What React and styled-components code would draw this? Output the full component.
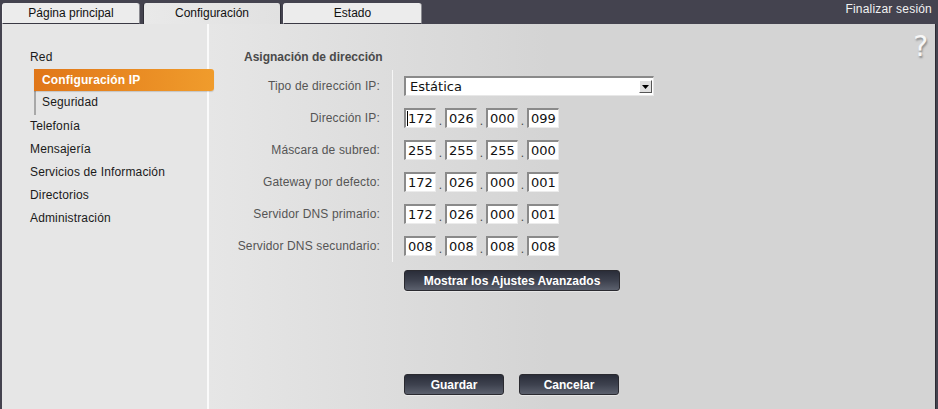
import React from "react";
import styled, { createGlobalStyle } from "styled-components";

const Global = createGlobalStyle`
  html, body { margin: 0; padding: 0; background: #44434f; }
  body { font-family: "Liberation Sans", Arial, sans-serif; font-size: 12px; }
  * { box-sizing: border-box; }
`;

const Page = styled.div`
  width: 938px;
  height: 409px;
  background: #44434f;
  display: flex;
  flex-direction: column;
  overflow: hidden;
`;

const TopBar = styled.div`
  height: 24px;
  display: flex;
  align-items: flex-end;
  padding-left: 2px;
  position: relative;
`;

const Tabs = styled.div`
  display: flex;
  align-items: flex-end;
`;

const Tab = styled.div`
  width: ${(p) => p.$w}px;
  height: 21px;
  margin-left: ${(p) => p.$ml || 0}px;
  border-radius: 3px 3px 0 0;
  background: ${(p) => (p.$active ? "linear-gradient(to right, #e9e9e9, #e1e1e1)" : "#ececec")};
  border-right: 1px solid ${(p) => (p.$active ? "#2f2f38" : "#8a8a90")};
  border-left: 1px solid ${(p) => (p.$active ? "#2f2f38" : "#f4f4f4")};
  border-bottom: ${(p) => (p.$active ? "none" : "1px solid #3a3944")};
  color: #111;
  font-size: 12px;
  display: flex;
  align-items: center;
  justify-content: center;
  padding-bottom: ${(p) => (p.$active ? 2 : 1)}px;
`;

const Logout = styled.div`
  margin-left: auto;
  align-self: flex-start;
  padding-top: 2px;
  padding-right: 6px;
  color: #f2f2f2;
  font-size: 12px;
  letter-spacing: 0.2px;
`;

const Body = styled.div`
  flex: 1;
  display: flex;
  margin: 0 2px 0 2px;
  position: relative;
`;

const Sidebar = styled.div`
  width: 207px;
  background: #e6e6e6;
  border-right: 2px solid #fafafa;
  padding-top: 22px;
  padding-left: 28px;
  display: flex;
  flex-direction: column;
  position: relative;
  z-index: 1;
`;

const NavItem = styled.div`
  height: 23px;
  line-height: 23px;
  color: #1a1a1a;
  font-size: 12px;
  letter-spacing: 0.15px;
`;

const SubGroup = styled.div`
  margin-left: 4px;
  border-left: 2px solid #a8a8a8;
  display: flex;
  flex-direction: column;
  padding-bottom: 1px;
`;

const SubItem = styled.div`
  height: ${(p) => (p.$active ? 22 : 23)}px;
  line-height: ${(p) => (p.$active ? 22 : 23)}px;
  width: ${(p) => (p.$active ? "180px" : "auto")};
  margin-left: -2px;
  padding-left: 8px;
  border-radius: ${(p) => (p.$active ? "0 3px 3px 0" : "0")};
  background: ${(p) =>
    p.$active ? "linear-gradient(to right, #e07618, #f09c2c)" : "transparent"};
  color: ${(p) => (p.$active ? "#fff" : "#1a1a1a")};
  font-weight: ${(p) => (p.$active ? "bold" : "normal")};
  font-size: 12px;
  letter-spacing: 0.15px;
  box-shadow: ${(p) => (p.$active ? "0 1px 1px rgba(0,0,0,0.15)" : "none")};
`;

const Main = styled.div`
  flex: 1;
  background: linear-gradient(to right, #e6e6e6 0px, #d9d9d9 250px, #d4d4d4 340px, #d4d4d4 100%);
  padding-top: 25px;
  display: flex;
  flex-direction: column;
  position: relative;
  border-right: 1px solid #2c2b33;
`;

const Heading = styled.div`
  padding-left: 35px;
  height: 16px;
  line-height: 16px;
  font-weight: bold;
  font-size: 12px;
  color: #4a4a4a;
  margin-bottom: 5px;
`;

const Form = styled.div`
  display: grid;
  grid-template-columns: 184px 1fr;
  grid-auto-rows: 32px;
`;

const Label = styled.div`
  border-right: 1px solid #f6f6f6;
  padding-right: 12px;
  text-align: right;
  color: #555;
  font-size: 12px;
  letter-spacing: 0.15px;
  display: flex;
  align-items: center;
  justify-content: flex-end;
  white-space: nowrap;
  padding-bottom: ${(p) => (p.$first ? 0 : 1)}px;
`;

const Control = styled.div`
  padding-left: 11px;
  display: flex;
  align-items: center;
`;

const Select = styled.div`
  width: 250px;
  height: 20px;
  background: #fff;
  border-top: 2px solid #8a8a8a;
  border-left: 2px solid #8a8a8a;
  border-bottom: 1px solid #e8e8e8;
  border-right: 1px solid #e8e8e8;
  display: flex;
  align-items: center;
  font-family: "DejaVu Sans", sans-serif;
  font-size: 13px;
  color: #111;
  padding-left: 4px;
  padding-right: 1px;
`;

const SelectText = styled.span`
  flex: 1;
`;

const Arrow = styled.div`
  width: 13px;
  height: 13px;
  background: #e0e0e0;
  border-top: 1px solid #fff;
  border-left: 1px solid #fff;
  border-right: 1px solid #555;
  border-bottom: 1px solid #555;
  display: flex;
  align-items: center;
  justify-content: center;
`;

const IpGroup = styled.div`
  display: flex;
  align-items: flex-end;
`;

const Octet = styled.div`
  width: 32px;
  height: 20px;
  background: #fff;
  border-top: 2px solid #8a8a8a;
  border-left: 2px solid #8a8a8a;
  border-bottom: 1px solid #ececec;
  border-right: 1px solid #ececec;
  font-family: "DejaVu Sans", sans-serif;
  font-size: 13px;
  color: #111;
  line-height: 17px;
  padding-left: 2px;
  position: relative;
`;

const Caret = styled.span`
  position: absolute;
  left: 1px;
  top: 1px;
  width: 1px;
  height: 15px;
  background: #000;
`;

const Dot = styled.span`
  width: 9px;
  text-align: center;
  color: #444;
  font-size: 12px;
  line-height: 14px;
`;

const DarkButton = styled.div`
  width: ${(p) => p.$w}px;
  height: 21px;
  border-radius: 3px;
  background: linear-gradient(to bottom, #2a2d39 0%, #3d414e 50%, #5b606d 100%);
  border: 1px solid #2a2a30;
  color: #fff;
  font-weight: bold;
  font-size: 12px;
  display: flex;
  align-items: center;
  justify-content: center;
  box-shadow: 0 1px 0 rgba(255,255,255,0.4);
`;

const AdvRow = styled.div`
  padding-left: 195px;
  margin-top: 8px;
`;

const ActionRow = styled.div`
  padding-left: 195px;
  margin-top: 83px;
  display: flex;
  gap: 15px;
`;

const Help = styled.div`
  position: absolute;
  right: 7px;
  top: 8px;
  font-family: "DejaVu Sans", sans-serif;
  font-size: 28px;
  color: #f7f7f7;
  text-shadow: 1px 2px 2px rgba(0,0,0,0.35);
  line-height: 30px;
`;

const ipRows = [
  { label: "Dirección IP:", v: ["172", "026", "000", "099"], caret: true },
  { label: "Máscara de subred:", v: ["255", "255", "255", "000"] },
  { label: "Gateway por defecto:", v: ["172", "026", "000", "001"] },
  { label: "Servidor DNS primario:", v: ["172", "026", "000", "001"] },
  { label: "Servidor DNS secundario:", v: ["008", "008", "008", "008"] },
];

export default function App() {
  return (
    <Page>
      <Global />
      <TopBar>
        <Tabs>
          <Tab $w={138}>Página principal</Tab>
          <Tab $w={138} $active $ml={3}>Configuración</Tab>
          <Tab $w={139} $ml={2}>Estado</Tab>
        </Tabs>
        <Logout>Finalizar sesión</Logout>
      </TopBar>
      <Body>
        <Sidebar>
          <NavItem>Red</NavItem>
          <SubGroup>
            <SubItem $active>Configuración IP</SubItem>
            <SubItem>Seguridad</SubItem>
          </SubGroup>
          <NavItem>Telefonía</NavItem>
          <NavItem>Mensajería</NavItem>
          <NavItem>Servicios de Información</NavItem>
          <NavItem>Directorios</NavItem>
          <NavItem>Administración</NavItem>
        </Sidebar>
        <Main>
          <Help>?</Help>
          <Heading>Asignación de dirección</Heading>
          <Form>
            <Label $first>Tipo de dirección IP:</Label>
            <Control>
              <Select>
                <SelectText>Estática</SelectText>
                <Arrow>
                  <svg width="7" height="4" viewBox="0 0 7 4">
                    <path d="M0 0 L7 0 L3.5 4 Z" fill="#000" />
                  </svg>
                </Arrow>
              </Select>
            </Control>
            {ipRows.map((r) => (
              <React.Fragment key={r.label}>
                <Label>{r.label}</Label>
                <Control>
                  <IpGroup>
                    {r.v.map((o, i) => (
                      <React.Fragment key={i}>
                        {i > 0 && <Dot>.</Dot>}
                        <Octet>
                          {r.caret && i === 0 && <Caret />}
                          {o}
                        </Octet>
                      </React.Fragment>
                    ))}
                  </IpGroup>
                </Control>
              </React.Fragment>
            ))}
          </Form>
          <AdvRow>
            <DarkButton $w={216}>Mostrar los Ajustes Avanzados</DarkButton>
          </AdvRow>
          <ActionRow>
            <DarkButton $w={100}>Guardar</DarkButton>
            <DarkButton $w={100}>Cancelar</DarkButton>
          </ActionRow>
        </Main>
      </Body>
    </Page>
  );
}
